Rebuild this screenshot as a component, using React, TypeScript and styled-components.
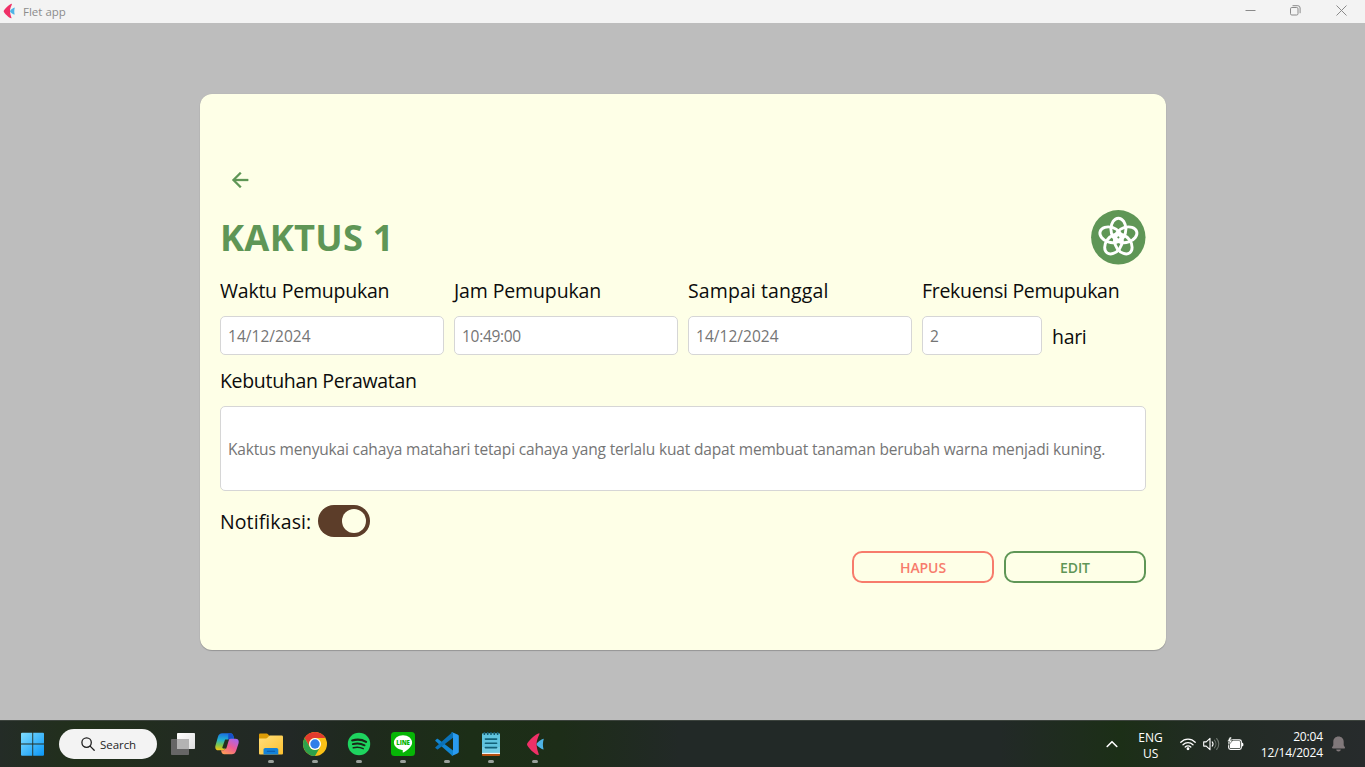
import React from 'react';
import styled, { createGlobalStyle } from 'styled-components';

const green = '#5f9656';
const coral = '#f77c6c';
const cream = '#feffe7';

const GlobalStyle = createGlobalStyle`
  * { box-sizing: border-box; }
  html, body { margin: 0; padding: 0; overflow: hidden; }
  body { font-family: "Open Sans", "Noto Sans", sans-serif; }
  button { font-family: inherit; padding: 0; background: none; border: none; }
  svg { display: block; }
`;

const Screen = styled.div`
  width: 1365px;
  height: 767px;
  display: flex;
  flex-direction: column;
  background: #bdbdbd;
`;

/* ---------- window title bar ---------- */

const TitleBar = styled.header`
  height: 23px;
  flex: none;
  display: flex;
  align-items: flex-start;
  justify-content: space-between;
  background: #f3f3f3;
`;

const AppTitle = styled.div`
  height: 22px;
  display: flex;
  align-items: center;
  gap: 8px;
  padding-left: 3px;
  font-size: 11.5px;
  color: #8c8c8c;
`;

const WindowControls = styled.div`
  display: flex;
  height: 21px;
  padding-right: 1px;
`;

const WindowButton = styled.button`
  width: 45.5px;
  height: 21px;
  display: flex;
  align-items: center;
  justify-content: center;
  color: #8a8a8a;
`;

/* ---------- plant card ---------- */

const Stage = styled.main`
  flex: 1;
  display: flex;
  justify-content: center;
  align-items: flex-start;
  padding: 70.5px 0 0 1px;
`;

const Card = styled.section`
  width: 966px;
  height: 556px;
  padding: 66.5px 20px 0;
  display: flex;
  flex-direction: column;
  gap: 10px;
  border-radius: 12px;
  background: ${cream};
  box-shadow: 0 1px 1px rgba(0, 0, 0, 0.2), 0 0 1px rgba(0, 0, 0, 0.12);
`;

const BackButton = styled.button`
  width: 40px;
  height: 40px;
  display: flex;
  align-items: center;
  justify-content: center;
  color: ${green};
`;

const HeadingRow = styled.div`
  height: 55px;
  display: flex;
  align-items: center;
  justify-content: space-between;
`;

const PlantName = styled.h1`
  margin: 0;
  font-size: 36.3px;
  line-height: 55px;
  font-weight: 700;
  letter-spacing: 0.25px;
  color: ${green};
`;

const Fields = styled.div`
  display: flex;
  gap: 10px;
`;

const Field = styled.div<{ $width?: number }>`
  width: ${p => (p.$width ? `${p.$width}px` : 'auto')};
  display: flex;
  flex-direction: column;
  gap: 10px;
`;

const Label = styled.span<{ $tracking?: number }>`
  height: 31px;
  line-height: 31px;
  font-size: 19.5px;
  letter-spacing: ${p => p.$tracking ?? 0}px;
  white-space: nowrap;
  color: #0c0c0c;
`;

const UnitLabel = styled(Label)`
  line-height: 33px;
`;

const InputRow = styled.div`
  display: flex;
  align-items: center;
  gap: 10px;
`;

const ValueBox = styled.div<{ $width: number; $height: number; $tracking?: number }>`
  width: ${p => p.$width}px;
  height: ${p => p.$height}px;
  flex: none;
  display: flex;
  align-items: center;
  padding: 1px 7px 0;
  border: 1px solid #d6d6d6;
  border-radius: 5px;
  background: #fff;
  font-size: 15.5px;
  letter-spacing: ${p => p.$tracking ?? 0}px;
  white-space: nowrap;
  color: #757575;
`;

const NotificationRow = styled.div`
  height: 40px;
  display: flex;
  align-items: center;
  gap: 7px;
`;

const Toggle = styled.div`
  width: 52px;
  height: 32px;
  padding: 4px;
  display: flex;
  justify-content: flex-end;
  border-radius: 16px;
  background: #5c3d29;
`;

const ToggleThumb = styled.div`
  width: 24px;
  height: 24px;
  border-radius: 50%;
  background: ${cream};
`;

const Actions = styled.div`
  display: flex;
  justify-content: flex-end;
  gap: 10px;
`;

const ActionButton = styled.button<{ $color: string }>`
  width: 142px;
  height: 32px;
  padding-top: 1px;
  border: 2px solid ${p => p.$color};
  border-radius: 10px;
  color: ${p => p.$color};
  font-size: 14px;
  font-weight: 600;
  line-height: 20px;
  letter-spacing: -0.1px;
`;

/* ---------- taskbar ---------- */

const Taskbar = styled.footer`
  height: 47px;
  flex: none;
  display: flex;
  align-items: stretch;
  justify-content: space-between;
  border-top: 1px solid #3c433d;
  background: linear-gradient(90deg, #242c27 0px, #21301a 85px, #222b22 190px, #222826 290px, #1e2a1c 370px, #1c2e17 470px, #1d2d18 560px, #222927 680px, #222927 1000px, #1c2f17 1120px, #222b24 1210px, #272b2c 1365px);
`;

const Pinned = styled.div`
  display: flex;
  align-items: center;
  padding-left: 21px;
`;

const TaskSlot = styled.div`
  width: 44px;
  height: 46px;
  display: flex;
  flex-direction: column;
  align-items: center;
  padding-top: 11px;
`;

const StartSlot = styled.div`
  width: 38px;
`;

const SearchPill = styled.div`
  width: 98px;
  height: 30px;
  margin-right: 4px;
  display: flex;
  align-items: center;
  gap: 5px;
  padding-left: 22px;
  border-radius: 15px;
  background: #f3f3f3;
  font-size: 11.5px;
  letter-spacing: -0.05px;
  color: #1f1f1f;
`;

const RunningMark = styled.i`
  width: 6px;
  height: 3px;
  margin-top: 4px;
  border-radius: 2px;
  background: #9aa09b;
`;

const Tray = styled.div`
  display: flex;
  align-items: center;
  padding-right: 19px;
  color: #fff;
`;

const Chevron = styled.div`
  width: 12px;
  margin-right: 20px;
`;

const Stacked = styled.div<{ $align: string; $tracking?: number; $drop?: number }>`
  padding-top: ${p => p.$drop ?? 0}px;
  text-align: ${p => p.$align};
  font-size: 12px;
  line-height: 16px;
  letter-spacing: ${p => p.$tracking ?? 0}px;
  white-space: nowrap;
`;

const StatusIcons = styled.div`
  display: flex;
  gap: 7px;
  margin: 0 17px;
`;

const Bell = styled.div`
  margin-left: 8px;
`;

function FletLogo({ width, height }: { width: number; height: number }) {
  return (
    <svg width={width} height={height} viewBox="0 0 18 24">
      <path d="M13.2 1.2C10 1.2 1 10.2 1 12.4c0 2.2 8.400 10.600 11.400 10.600 1.600 0-1.800-4.500-1.800-10.800 0-6 4-11 2.600-11z" fill="#ef3067" />
      <path d="M17.800 6.700C15.400 7 10.600 10.600 10.600 12.200c0 1.600 4.600 4.900 7 5.200-1-3.400-.9-7 .2-10.700z" fill="#4eb3e6" />
    </svg>
  );
}

function ArrowBack() {
  return (
    <svg width="24" height="24" viewBox="0 0 24 24" fill="currentColor" stroke="currentColor" strokeWidth=".3">
      <path d="M20.200 11H7.830l5.590-5.590L12 4l-8 8 8 8 1.410-1.410L7.830 13H20.200v-2z" />
    </svg>
  );
}

function FlowerBadge() {
  return (
    <svg width="55" height="55" viewBox="0 0 55 55">
      <circle cx="27.300" cy="27.300" r="27.200" fill={green} />
      <g fill="none" stroke="#fff" strokeWidth="2.900">
        {[0, 72, 144, 216, 288].map(angle => (
          <ellipse key={angle} cx="27.400" cy="19.100" rx="7.500" ry="10.900" transform={`rotate(${angle} 27.400 27.400)`} />
        ))}
      </g>
    </svg>
  );
}

function WindowsLogo() {
  return (
    <svg width="24" height="24" viewBox="0 0 24 24">
      <defs>
        <linearGradient id="win" x1="0" y1="0" x2="1" y2="1" gradientUnits="objectBoundingBox">
          <stop offset="0" stopColor="#7fdcff" />
          <stop offset="1" stopColor="#0a97f7" />
        </linearGradient>
      </defs>
      <path d="M1 .8H11.300v10.700H0V1.800a1 1 0 0 1 1-1zM12.200.8h9.800a1 1 0 0 1 1 1v9.700H12.200zM0 12.500H11.300v11.200H1a1 1 0 0 1-1-1zM12.200 12.500h10.800v10.200a1 1 0 0 1-1 1h-9.800z" fill="url(#win)" />
    </svg>
  );
}

function SearchIcon() {
  return (
    <svg width="14" height="14" viewBox="0 0 14 14" fill="none" stroke="#1f1f1f" strokeWidth="1.300" strokeLinecap="round">
      <circle cx="5.600" cy="5.600" r="4.700" />
      <path d="M9.100 9.100l4.100 4.100" />
    </svg>
  );
}

function TaskViewIcon() {
  return (
    <svg width="24" height="24" viewBox="0 0 24 24">
      <defs>
        <linearGradient id="tv" x1="0" y1="0" x2="1" y2="1">
          <stop offset="0" stopColor="#fff" />
          <stop offset="1" stopColor="#dedede" />
        </linearGradient>
      </defs>
      <rect x="6" y="1" width="18" height="16" rx=".8" fill="url(#tv)" />
      <rect x="0" y="7" width="18" height="16" rx=".8" fill="#666" />
      <rect x="6" y="7" width="12" height="10" fill="#b3b3b3" />
    </svg>
  );
}

function CopilotIcon() {
  return (
    <svg width="24" height="24" viewBox="0 0 24 24">
      <defs>
        <linearGradient id="cpa" x1=".4" y1="0" x2=".3" y2="1">
          <stop offset="0" stopColor="#1b6fe0" />
          <stop offset=".4" stopColor="#22b3cf" />
          <stop offset=".7" stopColor="#7cc64f" />
          <stop offset="1" stopColor="#f4c714" />
        </linearGradient>
        <linearGradient id="cpb" x1=".8" y1="0" x2=".2" y2="1">
          <stop offset="0" stopColor="#a765ee" />
          <stop offset=".5" stopColor="#ee5b94" />
          <stop offset="1" stopColor="#ff9c55" />
        </linearGradient>
      </defs>
      <path d="M7.300 1.200h8.200c1.700 0 2.400 1.200 2.900 2.800l.8 2.700h-3.100c-1.700 0-2.600.8-3.100 2.400L10.700 16c-.5 1.700-1.500 2.300-3.100 2.300H3.500C.7 18.300-.2 16.200.5 13.500l2.400-8.600c.7-2.500 2.100-3.700 4.400-3.700z" fill="url(#cpa)" />
      <path d="M13.400 1.200h2.100c1.700 0 2.400 1.200 2.900 2.800l.8 2.700h-3.100c-1.500 0-2.500.6-3 2.100z" fill="#174fc9" />
      <path d="M16.700 22.300H9.200c-1.700 0-2.400-1-2.800-2.500L6 18.300h1.600c1.600 0 2.600-.6 3.100-2.300L13 9.100c.5-1.600 1.400-2.400 3.100-2.400h4.500c2.700 0 3.600 2.100 2.900 4.700l-2.400 7.400c-.8 2.400-2.100 3.500-4.400 3.500z" fill="url(#cpb)" />
      <path d="M10.100 7.600h3.900l-2.700 8.800H8.200c-.7 0-1-.5-.8-1.200z" fill="#21301f" />
    </svg>
  );
}

function ExplorerIcon() {
  return (
    <svg width="24" height="24" viewBox="0 0 24 24">
      <defs>
        <linearGradient id="fold" x1="0" y1="0" x2="1" y2="1">
          <stop offset="0" stopColor="#ffdf7c" />
          <stop offset="1" stopColor="#fdc02f" />
        </linearGradient>
      </defs>
      <path d="M0 2.800C0 2 .6 1.500 1.300 1.500h6.400c.5 0 .8.2 1.100.5L11 4.500v4H0z" fill="#dd9c06" />
      <path d="M0 6.400h7c.5 0 .8-.1 1.100-.4l2-2c.3-.3.7-.4 1.100-.4h11.500c.8 0 1.300.6 1.300 1.300v16.300c0 .8-.5 1.300-1.300 1.300H1.300C.5 22.500 0 22 0 21.200z" fill="url(#fold)" />
      <path d="M4.500 22.500v-4.700c0-1 .8-1.800 1.800-1.800h11.200c1 0 1.800.8 1.800 1.800v4.700z" fill="#1382d8" />
      <path d="M8.500 18.700h7c.4 0 .7.2.7.5 0 .4-.3.600-.7.600h-7c-.4 0-.7-.2-.7-.6 0-.3.300-.5.700-.5z" fill="#0a57a8" />
    </svg>
  );
}

function ChromeIcon() {
  return (
    <svg width="24" height="24" viewBox="0 0 24 24">
      <circle cx="12" cy="12" r="12" fill="#fbc116" />
      <path d="M1.610 6A12 12 0 0 1 22.390 6H12a6 6 0 0 0-5.200 9z" fill="#e33b2e" />
      <path d="M1.610 6A12 12 0 0 0 12 24l5.200-9A6 6 0 0 1 6.800 15z" fill="#2da04b" />
      <circle cx="12" cy="12" r="6" fill="#fff" />
      <circle cx="12" cy="12" r="4.700" fill="#2f7de9" />
    </svg>
  );
}

function SpotifyIcon() {
  return (
    <svg width="24" height="24" viewBox="0 0 24 24">
      <circle cx="12" cy="12" r="11.200" fill="#1ed45f" />
      <g fill="none" stroke="#1a2618" strokeLinecap="round">
        <path d="M5.200 8.500c4.700-1.400 10-.9 13.900 1.300" strokeWidth="2.100" />
        <path d="M5.800 12.200c4-1.200 8.400-.7 11.800 1.200" strokeWidth="1.800" />
        <path d="M6.300 15.700c3.300-.9 7-.6 9.900 1" strokeWidth="1.500" />
      </g>
    </svg>
  );
}

const LineBadge = styled.div`
  position: relative;
  width: 24px;
  height: 24px;
`;

const LineText = styled.span`
  position: absolute;
  left: 0;
  right: 0;
  top: 7px;
  text-align: center;
  font: 800 6px/8px "Open Sans", sans-serif;
  letter-spacing: -0.1px;
  color: #06b506;
`;

function LineIcon() {
  return (
    <LineBadge>
      <svg width="24" height="24" viewBox="0 0 24 24">
        <rect width="24" height="24" rx="3.500" fill="#06b506" />
        <path d="M12 3.300c5 0 9.100 3.200 9.100 7.300 0 1.700-.7 3.200-2 4.600-2 2.200-5.300 4.500-6.800 5.300-.7.300-.7-.2-.6-.7l.1-1.100c0-.4-.1-.6-.8-.7-4.600-.6-8.100-3.700-8.100-7.400 0-4.100 4.100-7.300 9.100-7.300z" fill="#fff" />
      </svg>
      <LineText>LINE</LineText>
    </LineBadge>
  );
}

function VSCodeIcon() {
  return (
    <svg width="24" height="24" viewBox="0 0 24 24">
      <path d="M.4 8.200l1.300-1.200c.4-.3.900-.4 1.300-.1L18 18.400V24l-1-.4L.4 8.900c-.2-.2-.2-.5 0-.7z" fill="#1186d2" />
      <path d="M.4 15.900l1.300 1.200c.4.3.9.4 1.300.1L18 5.700V0l-1 .4L.4 15.200c-.2.200-.2.500 0 .7z" fill="#0a72b8" />
      <path d="M17.300 23.800c-.5.200-1.100.1-1.500-.3.700.5 2.200.1 2.200-1V1.500c0-1.100-1.400-1.600-2.200-.9.400-.5 1-.6 1.500-.4l5.100 2.400c.900.400 1.400.9 1.400 1.600v15.600c0 .7-.5 1.200-1.400 1.600z" fill="#2a9bf0" />
    </svg>
  );
}

function NotepadIcon() {
  return (
    <svg width="24" height="24" viewBox="0 0 24 24">
      <rect x="3" y="19" width="18" height="5" rx="1" fill="#b65112" />
      <rect x="3" y="18" width="18" height="4" fill="#eef3f5" />
      <path d="M3 2.500c0-.8.500-1.300 1.300-1.300h15.400c.8 0 1.300.5 1.300 1.300V20.800H3z" fill="#5fc3de" />
      <path d="M3 15h18v5.800H3z" fill="#83d3e7" opacity=".6" />
      <path d="M5.400 0v3M8.700 0v3M12 0v3M15.300 0v3M18.600 0v3" stroke="#155a70" strokeWidth="1.500" />
      <path d="M6.400 7.100h11.200M6.400 11.300h11.200M6.400 15.600h11.200" stroke="#126178" strokeWidth="1.600" strokeLinecap="round" />
    </svg>
  );
}

function WifiIcon() {
  return (
    <svg width="16" height="14" viewBox="0 0 16 14" fill="none" stroke="#fff" strokeWidth="1.300" strokeLinecap="round">
      <path d="M.8 5.200c4-4.200 10.400-4.200 14.400 0" />
      <path d="M3 7.700c2.800-2.900 7.200-2.900 10 0" />
      <path d="M5.200 10c1.600-1.600 4-1.600 5.600 0" />
      <circle cx="8" cy="11.700" r=".8" fill="#fff" />
    </svg>
  );
}

function VolumeIcon() {
  return (
    <svg width="17" height="14" viewBox="0 0 17 14" fill="none" stroke="#fff" strokeWidth="1.100" strokeLinecap="round" strokeLinejoin="round">
      <path d="M.7 4.900h2.500L7 1.300v11.400L3.200 9.100H.7z" />
      <path d="M9.200 4.900c1 1.200 1 3 0 4.200" />
      <path d="M11.400 3.100c2 2.200 2 5.600 0 7.800M13.600 1.500c2.900 3.100 2.900 7.900 0 11" stroke="#6a726b" />
    </svg>
  );
}

function BatteryIcon() {
  return (
    <svg width="17" height="14" viewBox="0 0 17 14">
      <rect x="1.700" y="2.800" width="12.600" height="9.600" rx="1.800" fill="none" stroke="#fff" strokeWidth="1.200" />
      <rect x="3" y="4.100" width="10" height="7" rx=".6" fill="#fff" />
      <path d="M15 5.700c1 0 1.400.5 1.400 1.900s-.4 1.900-1.400 1.900z" fill="#fff" />
      <path d="M2.600 0L.3 4.600h2L1.600 8.200 5.800 3.200H3.600L4.800 0z" fill="#fff" stroke="#222b24" strokeWidth=".6" />
    </svg>
  );
}

function BellIcon() {
  return (
    <svg width="15" height="16" viewBox="0 0 15 16" fill="#80787a">
      <path d="M7.500.5c-3 0-5.200 2.200-5.200 5.200v3.600L1 11.600c-.2.500.1.900.6.900h11.800c.5 0 .8-.4.6-.9l-1.300-2.300V5.700c0-3-2.200-5.200-5.200-5.200zM5.200 13.500a2.300 2 0 0 0 4.600 0z" />
    </svg>
  );
}

const runningApps = [ExplorerIcon, ChromeIcon, SpotifyIcon, LineIcon, VSCodeIcon, NotepadIcon];

const schedule = [
  { label: 'Waktu Pemupukan', labelTracking: -0.23, value: '14/12/2024', tracking: 0.03 },
  { label: 'Jam Pemupukan', labelTracking: -0.13, value: '10:49:00', tracking: -0.3 },
  { label: 'Sampai tanggal', labelTracking: 0.1, value: '14/12/2024', tracking: 0.03 },
];

export default function App() {
  return (
    <>
      <GlobalStyle />
      <Screen>
        <TitleBar>
          <AppTitle>
            <FletLogo width={12} height={16} />
            Flet app
          </AppTitle>
          <WindowControls>
            <WindowButton aria-label="Minimize">
              <svg width="11" height="11" viewBox="0 0 11 11" stroke="currentColor"><path d="M.5 5.500h10" /></svg>
            </WindowButton>
            <WindowButton aria-label="Restore">
              <svg width="11" height="11" viewBox="0 0 11 11" fill="none" stroke="currentColor">
                <rect x=".5" y="2.500" width="7.500" height="7.500" rx="1.300" />
                <path d="M2.500.7h5.300a2.300 2.300 0 0 1 2.300 2.300v5.200" />
              </svg>
            </WindowButton>
            <WindowButton aria-label="Close">
              <svg width="11" height="11" viewBox="0 0 11 11" stroke="currentColor"><path d="M.5.5l10 10M10.500.5l-10 10" /></svg>
            </WindowButton>
          </WindowControls>
        </TitleBar>

        <Stage>
          <Card>
            <BackButton aria-label="Back"><ArrowBack /></BackButton>
            <HeadingRow>
              <PlantName>KAKTUS 1</PlantName>
              <FlowerBadge />
            </HeadingRow>
            <Fields>
              {schedule.map(item => (
                <Field key={item.label} $width={224}>
                  <Label $tracking={item.labelTracking}>{item.label}</Label>
                  <ValueBox $width={224} $height={39} $tracking={item.tracking}>{item.value}</ValueBox>
                </Field>
              ))}
              <Field>
                <Label $tracking={-0.3}>Frekuensi Pemupukan</Label>
                <InputRow>
                  <ValueBox $width={120} $height={39}>2</ValueBox>
                  <UnitLabel $tracking={-0.3}>hari</UnitLabel>
                </InputRow>
              </Field>
            </Fields>
            <Field>
              <Label $tracking={-0.32}>Kebutuhan Perawatan</Label>
              <ValueBox $width={926} $height={85} $tracking={-0.162}>
                Kaktus menyukai cahaya matahari tetapi cahaya yang terlalu kuat dapat membuat tanaman berubah warna menjadi kuning.
              </ValueBox>
            </Field>
            <NotificationRow>
              <Label $tracking={0.1}>Notifikasi:</Label>
              <Toggle><ToggleThumb /></Toggle>
            </NotificationRow>
            <Actions>
              <ActionButton $color={coral}>HAPUS</ActionButton>
              <ActionButton $color={green}>EDIT</ActionButton>
            </Actions>
          </Card>
        </Stage>

        <Taskbar>
          <Pinned>
            <StartSlot><WindowsLogo /></StartSlot>
            <SearchPill><SearchIcon />Search</SearchPill>
            <TaskSlot><TaskViewIcon /></TaskSlot>
            <TaskSlot><CopilotIcon /></TaskSlot>
            {runningApps.map((Icon, i) => (
              <TaskSlot key={i}><Icon /><RunningMark /></TaskSlot>
            ))}
            <TaskSlot><FletLogo width={18} height={24} /><RunningMark /></TaskSlot>
          </Pinned>
          <Tray>
            <Chevron>
              <svg width="12" height="8" viewBox="0 0 12 8" fill="none" stroke="#fff" strokeWidth="1.600" strokeLinecap="round" strokeLinejoin="round">
                <path d="M1.200 6.500L6 1.700l4.800 4.800" />
              </svg>
            </Chevron>
            <Stacked $align="center" $drop={3}>ENG<br />US</Stacked>
            <StatusIcons><WifiIcon /><VolumeIcon /><BatteryIcon /></StatusIcons>
            <Stacked $align="right" $tracking={-0.15} $drop={1}>20:04<br />12/14/2024</Stacked>
            <Bell><BellIcon /></Bell>
          </Tray>
        </Taskbar>
      </Screen>
    </>
  );
}
